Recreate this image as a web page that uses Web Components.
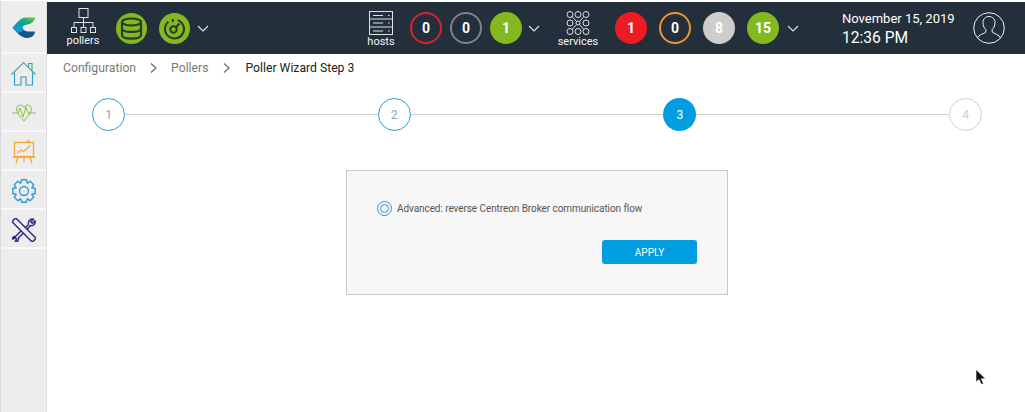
<!DOCTYPE html>
<html>
<head>
<meta charset="utf-8">
<title>Poller Wizard Step 3</title>
<style>
  html, body { margin: 0; height: 100%; background: #fff; overflow: hidden; }
  body { font-family: Roboto, "Liberation Sans", sans-serif; }
</style>
</head>
<body>
<app-shell>
  <side-nav slot="side"></side-nav>
  <top-bar slot="top"></top-bar>
  <bread-crumb slot="main">
    <span>Configuration</span>
    <span>Pollers</span>
    <span class="current">Poller Wizard Step 3</span>
  </bread-crumb>
  <wizard-steps slot="main" current="3" total="4"></wizard-steps>
  <wizard-card slot="main">Advanced: reverse Centreon Broker communication flow</wizard-card>
  <mouse-pointer></mouse-pointer>
</app-shell>

<script>
(function() {
  class AppShell extends HTMLElement {
    constructor() {
      super();
      this.attachShadow({mode: 'open'}).innerHTML = `
<style>
  :host { display: flex; height: 412px; position: relative; padding-top: 1px; box-sizing: border-box; }
  #side { display: block; flex: none; }
  #right { flex: 1; min-width: 0; padding-top: 1px; }
</style>
<div id="side"><slot name="side"></slot></div>
<div id="right">
  <slot name="top"></slot>
  <slot name="main"></slot>
</div>
<slot></slot>`;
    }
  }
  customElements.define('app-shell', AppShell);

  // outline of the settings gear, 8 teeth
  function gearPath(cx, cy, inner, outer) {
    let d = '';
    for (let i = 0; i < 8; i++) {
      let a = i * Math.PI / 4;
      [[-0.39, inner], [-0.22, outer], [0.22, outer], [0.39, inner]].forEach((p, j) => {
        let x = cx + p[1] * Math.cos(a + p[0]);
        let y = cy + p[1] * Math.sin(a + p[0]);
        d += (i == 0 && j == 0 ? 'M' : 'L') + x.toFixed(1) + ' ' + y.toFixed(1) + ' ';
      });
    }
    return d + 'Z';
  }

  class SideNav extends HTMLElement {
    constructor() {
      super();
      this.attachShadow({mode: 'open'}).innerHTML = `
<style>
  :host { display: block; width: 47px; height: 411px; box-sizing: border-box; background: #ededed; border-left: 1px solid #d8d8d8; border-right: 1px solid #dedede; }
  .item { height: 39px; box-sizing: border-box; padding-top: 2px; border-bottom: 2px solid #f8f8f8; display: flex; align-items: center; justify-content: center; }
  .logo { height: 53px; }
  .home svg { margin-top: 1px; }
  svg { display: block; fill: none; }
</style>
<div class="item logo">
  <svg width="24" height="22" viewBox="0 0 24 22">
    <defs>
      <linearGradient id="lg" x1="0" y1="1" x2="1" y2="0">
        <stop offset="0" stop-color="#0f8fd0"/>
        <stop offset="0.55" stop-color="#12a88c"/>
        <stop offset="1" stop-color="#8cc81e"/>
      </linearGradient>
    </defs>
    <path d="M0.500 10.500 C5 5.500 9 1 13 0.500 H23.500 C22.500 4 19.500 7 15.500 7.500 C12.500 8 10.500 9 10.500 10.500 L0.500 10.500 Z" fill="url(#lg)"/>
    <path d="M0.500 10.500 H10.500 C10.500 12.500 12.500 14 15.500 14.500 H23 C23 18 20 21 15 21 C9 21 5 15.500 0.500 10.500 Z" fill="#18568a"/>
    <path d="M0.500 10.500 H10.500 L12 13.500 L6 16 Z" fill="#129ad6"/>
  </svg>
</div>
<div class="item home">
  <svg width="25" height="24" viewBox="0 0 25 24" stroke-width="1.100">
    <path d="M0.500 12.500 L12.500 0.700 L24.500 12.500" stroke="#2ea9a0"/>
    <path d="M17.500 5 V1.500 H21 V8.500" stroke="#2ea9a0"/>
    <path d="M3.500 10.500 V23 H10 V15 H15 V23 H21.500 V10.500" stroke="#2a9fc0"/>
  </svg>
</div>
<div class="item">
  <svg width="26" height="18" viewBox="0 0 26 18" stroke="#94bd45" stroke-width="1">
    <path d="M1 9 H7 L9 4 L12 13 L15 3 L17 9 H25"/>
    <path d="M6 7 C4 1 11 -1 13 3.500 C15 -1 22 1 20 7 C19 11 15 14 13 17 C11 14 7 11 6 7 Z"/>
  </svg>
</div>
<div class="item">
  <svg width="24" height="24" viewBox="0 0 24 24" stroke="#f5a63b" stroke-width="1.300">
    <rect x="2.500" y="2.500" width="19" height="14"/>
    <path d="M1 17 H23" stroke-width="1.600"/>
    <path d="M5.500 13 L9 10 L11.500 11.500 L18.500 5.500" stroke-width="1.200"/>
    <path d="M6 17 L4 23 M18 17 L20 23 M12 17 V22"/>
    <path d="M15 1 H17 V2.500"/>
  </svg>
</div>
<div class="item">
  <svg width="24" height="24" viewBox="0 0 24 24" stroke="#2d9bdb" stroke-width="1.400" stroke-linejoin="round">
    <circle cx="12" cy="12" r="4.500"/>
    <path d="${gearPath(12, 12, 8.500, 11.500)}"/>
  </svg>
</div>
<div class="item">
  <svg width="24" height="24" viewBox="0 0 24 24" stroke="#2e2d86" stroke-width="1.500" stroke-linejoin="round">
    <path d="M9.500 12.500 L3.500 18.500 C1.500 18 0.500 19.500 0.800 21 L3.300 19.800 L4.500 21 L3.300 23.300 C5.500 23.800 7 22 6.200 20.300 L11.500 15"/>
    <path d="M13 10 L16.500 6.500 C15.800 3 18.500 0.500 21.500 1.200 L18.800 3.800 L20.300 5.300 L23 2.700 C23.800 5.500 21.300 8.300 18.500 7.500 L15 11.500"/>
    <rect x="-2.700" y="-14.500" width="5.400" height="29" rx="2" transform="translate(12 12) rotate(-45)" fill="#ededed"/>
  </svg>
</div>`;
    }
  }
  customElements.define('side-nav', SideNav);

  class StatusBadge extends HTMLElement {
    constructor() {
      super();
      this.attachShadow({mode: 'open'}).innerHTML = `
<style>
  :host { display: flex; width: 32px; height: 32px; box-sizing: border-box; border-radius: 50%; align-items: center; justify-content: center; color: #fff; font-weight: 700; font-size: 14px; border: 2px solid var(--ring, transparent); background: var(--fill, transparent); }
</style>
<slot></slot>`;
    }
  }
  customElements.define('status-badge', StatusBadge);

  class TopBar extends HTMLElement {
    constructor() {
      super();
      const chevron = `<svg class="chev" width="12" height="7" viewBox="0 0 12 7"><path d="M1 1 L6 6 L11 1" stroke="#dfe3e6" stroke-width="1.100" fill="none"/></svg>`;
      this.attachShadow({mode: 'open'}).innerHTML = `
<style>
  :host { display: flex; align-items: center; height: 52px; background: #232f3b; color: #fff; }
  svg { display: block; flex: none; }
  .labelled { display: flex; flex-direction: column; align-items: center; font-size: 11px; line-height: 12px; color: #f2f4f5; flex: none; }
  .chev { margin-left: 7px; }
  .pollers { width: 42px; margin: -1px 0 0 15px; }
  .db { margin-left: 12px; }
  .gauge { margin-left: 12px; }
  .hosts { width: 40px; margin: 2px 0 0 152px; }
  .hosts span, .services span { margin-top: 1px; }
  .services { width: 42px; margin: 2px 0 0 17px; }
  status-badge { margin-left: 8px; flex: none; }
  .hosts + status-badge { margin-left: 9px; }
  .services + status-badge { margin-left: 16px; }
  .s2 { margin-left: 12px; }
  .hosts-chev { margin-left: 6px; }
  .svc-chev { margin-left: 8px; }
  .date { margin: 3px 0 0 43px; width: 123px; flex: none; }
  .date div:first-child { font-size: 13px; line-height: 17px; }
  .date div:last-child { font-size: 15.600px; line-height: 23px; }
  .user { margin-left: 8px; }
</style>
<div class="labelled pollers">
  <svg width="25" height="25" viewBox="0 0 25 25" fill="none" stroke="#dfe3e6" stroke-width="1">
    <rect x="8" y="0.500" width="9" height="9"/>
    <path d="M12.500 10 V14.500 M3 19 V14.500 H22 V19 M12.500 14.500 V19"/>
    <rect x="0.500" y="19.500" width="5" height="5"/>
    <rect x="10" y="19.500" width="5" height="5"/>
    <rect x="19.500" y="19.500" width="5" height="5"/>
  </svg>
  <span style="margin-top:2px">pollers</span>
</div>
<svg class="db" width="31" height="31" viewBox="0 0 31 31">
  <circle cx="15.500" cy="15.500" r="15.500" fill="#84b81f"/>
  <g fill="none" stroke="#2a3a2c" stroke-width="2.200">
    <ellipse cx="15.500" cy="9" rx="9.500" ry="3.500"/>
    <path d="M6 9 V22 C6 26.800 25 26.800 25 22 V9"/>
    <path d="M6 15.500 C6 20 25 20 25 15.500"/>
  </g>
</svg>
<svg class="gauge" width="31" height="31" viewBox="0 0 31 31">
  <circle cx="15.500" cy="15.500" r="15.500" fill="#84b81f"/>
  <g fill="none" stroke="#2a3a2c" stroke-width="2">
    <path d="M18.750 7.070 A9.500 9.500 0 1 1 9.400 8.720"/>
    <path d="M13.500 6 L14 9"/>
    <circle cx="14.500" cy="16.500" r="3.200"/>
    <path d="M17 14 L20.500 10.500"/>
  </g>
</svg>
${chevron}
<div class="labelled hosts">
  <svg width="24" height="24" viewBox="0 0 24 24" fill="none" stroke="#dfe3e6" stroke-width="1">
    <rect x="0.500" y="0.500" width="23" height="23"/>
    <path d="M0.500 8 H23.500 M0.500 16 H23.500"/>
    <path d="M4 4.500 H14 M4 12 H14 M4 20 H14 M19 4.500 H20.500 M19 12 H20.500 M19 20 H20.500"/>
  </svg>
  <span>hosts</span>
</div>
<status-badge style="--ring:#e0212c">0</status-badge>
<status-badge style="--ring:#7d858c">0</status-badge>
<status-badge style="--fill:#84b81f">1</status-badge>
${chevron.replace('class="chev"', 'class="chev hosts-chev"')}
<div class="labelled services">
  <svg width="24" height="24" viewBox="0 0 24 24" fill="none" stroke="#dfe3e6" stroke-width="1">
    <circle cx="4" cy="3.500" r="3"/><circle cx="12" cy="3.500" r="3"/><circle cx="20" cy="3.500" r="3"/>
    <circle cx="4" cy="12" r="3"/><circle cx="12" cy="12" r="2"/><circle cx="20" cy="12" r="3"/>
    <circle cx="4" cy="20.500" r="3"/><circle cx="12" cy="20.500" r="3"/><circle cx="20" cy="20.500" r="3"/>
    <path d="M6.200 5.700 L10.500 10.500 M17.800 5.700 L13.500 10.500 M6.200 18.300 L10.500 13.500 M17.800 18.300 L13.500 13.500"/>
  </svg>
  <span>services</span>
</div>
<status-badge style="--fill:#ed1c24">1</status-badge>
<status-badge class="s2" style="--ring:#f0952b">0</status-badge>
<status-badge class="s2" style="--fill:#cdcdcd">8</status-badge>
<status-badge class="s2" style="--fill:#84b81f">15</status-badge>
${chevron.replace('class="chev"', 'class="chev svc-chev"')}
<div class="date">
  <div>November 15, 2019</div>
  <div>12:36 PM</div>
</div>
<svg class="user" width="32" height="32" viewBox="0 0 32 32" fill="none" stroke="#f2f4f5" stroke-width="1">
  <circle cx="16" cy="16" r="15.300"/>
  <path d="M4.500 26 C5.500 22.500 11 22 12.800 20 V17.500 C10.500 15.500 10 12.500 10 10.500 C10 7 12.500 4.500 16 4.500 C19.500 4.500 22 7 22 10.500 C22 12.500 21.500 15.500 19.200 17.500 V20 C21 22 26.500 22.500 27.500 26"/>
</svg>`;
    }
  }
  customElements.define('top-bar', TopBar);

  class BreadCrumb extends HTMLElement {
    constructor() {
      super();
      this.attachShadow({mode: 'open'}).innerHTML = `
<style>
  :host { display: flex; align-items: center; height: 28px; padding-left: 16px; font-size: 12.200px; color: #7a7a7a; }
  svg { margin: 0 14px; flex: none; }
  svg.second { margin: 0 15px; }
  ::slotted(.current) { color: #222; }
</style>
<slot name="a"></slot>
<svg width="7" height="10" viewBox="0 0 7 10"><path d="M1 0.500 L6 5 L1 9.500" fill="none" stroke="#777" stroke-width="1.500"/></svg>
<slot name="b"></slot>
<svg class="second" width="7" height="10" viewBox="0 0 7 10"><path d="M1 0.500 L6 5 L1 9.500" fill="none" stroke="#777" stroke-width="1.500"/></svg>
<slot name="c"></slot>`;
    }
    connectedCallback() {
      ['a', 'b', 'c'].forEach((n, i) => {
        if (this.children[i]) this.children[i].slot = n;
      });
    }
  }
  customElements.define('bread-crumb', BreadCrumb);

  class WizardSteps extends HTMLElement {
    constructor() {
      super();
      this.attachShadow({mode: 'open'});
    }
    connectedCallback() {
      let current = +this.getAttribute('current');
      let total = +this.getAttribute('total');
      let html = '';
      for (let i = 1; i <= total; i++) {
        let cls = i < current ? 'done' : (i == current ? 'active' : 'todo');
        html += `<div class="step ${cls}">${i}</div>`;
        if (i < total) html += '<div class="line"></div>';
      }
      this.shadowRoot.innerHTML = `
<style>
  :host { display: flex; align-items: center; margin-top: 16px; padding: 0 43px 0 45px; }
  .step { flex: none; width: 33px; height: 33px; box-sizing: border-box; border-radius: 50%; display: flex; align-items: center; justify-content: center; font-size: 12px; }
  .done { border: 1px solid #1f9fdc; color: #8aa4c0; }
  .active { background: #009ee0; color: #fff; }
  .todo { border: 1px solid #d2d2d2; color: #cfcfcf; }
  .line { flex: 1; height: 1px; background: #c9cfd2; }
</style>
${html}`;
    }
  }
  customElements.define('wizard-steps', WizardSteps);

  class WizardCard extends HTMLElement {
    constructor() {
      super();
      this.attachShadow({mode: 'open'}).innerHTML = `
<style>
  :host { display: block; box-sizing: border-box; width: 382px; height: 125px; margin: 39px 0 0 299px; padding: 30px 30px 0 30px; background: #f7f7f7; border: 1px solid #c8c8c8; font-size: 10px; letter-spacing: -0.080px; color: #555; }
  .row { display: flex; align-items: center; gap: 5px; height: 15px; }
  .radio { flex: none; width: 15px; height: 15px; box-sizing: border-box; border: 1px solid #1f9fdc; border-radius: 50%; display: flex; align-items: center; justify-content: center; }
  .radio i { width: 9px; height: 9px; box-sizing: border-box; border: 1px solid #1f9fdc; border-radius: 50%; }
  .foot { display: flex; justify-content: flex-end; margin-top: 24px; }
  button { width: 95px; height: 24px; border: 0; border-radius: 3px; background: #009ee0; color: #fff; font: inherit; font-size: 10px; letter-spacing: 0; padding: 0; }
</style>
<label class="row"><span class="radio"><i></i></span><span><slot></slot></span></label>
<div class="foot"><button>APPLY</button></div>`;
    }
  }
  customElements.define('wizard-card', WizardCard);

  class MousePointer extends HTMLElement {
    constructor() {
      super();
      this.attachShadow({mode: 'open'}).innerHTML = `
<style>
  :host { display: block; position: absolute; left: 975px; top: 369px; width: 12px; height: 17px; }
  svg { display: block; }
</style>
<svg width="12" height="17" viewBox="0 0 12 17"><path d="M1 0.500 V13 L4 10.500 L6.500 15.500 L8.500 14.500 L6.200 9.800 H10.500 Z" fill="#111" stroke="#fff" stroke-width="0.600"/></svg>`;
    }
  }
  customElements.define('mouse-pointer', MousePointer);
})();
</script>
</body>
</html>
